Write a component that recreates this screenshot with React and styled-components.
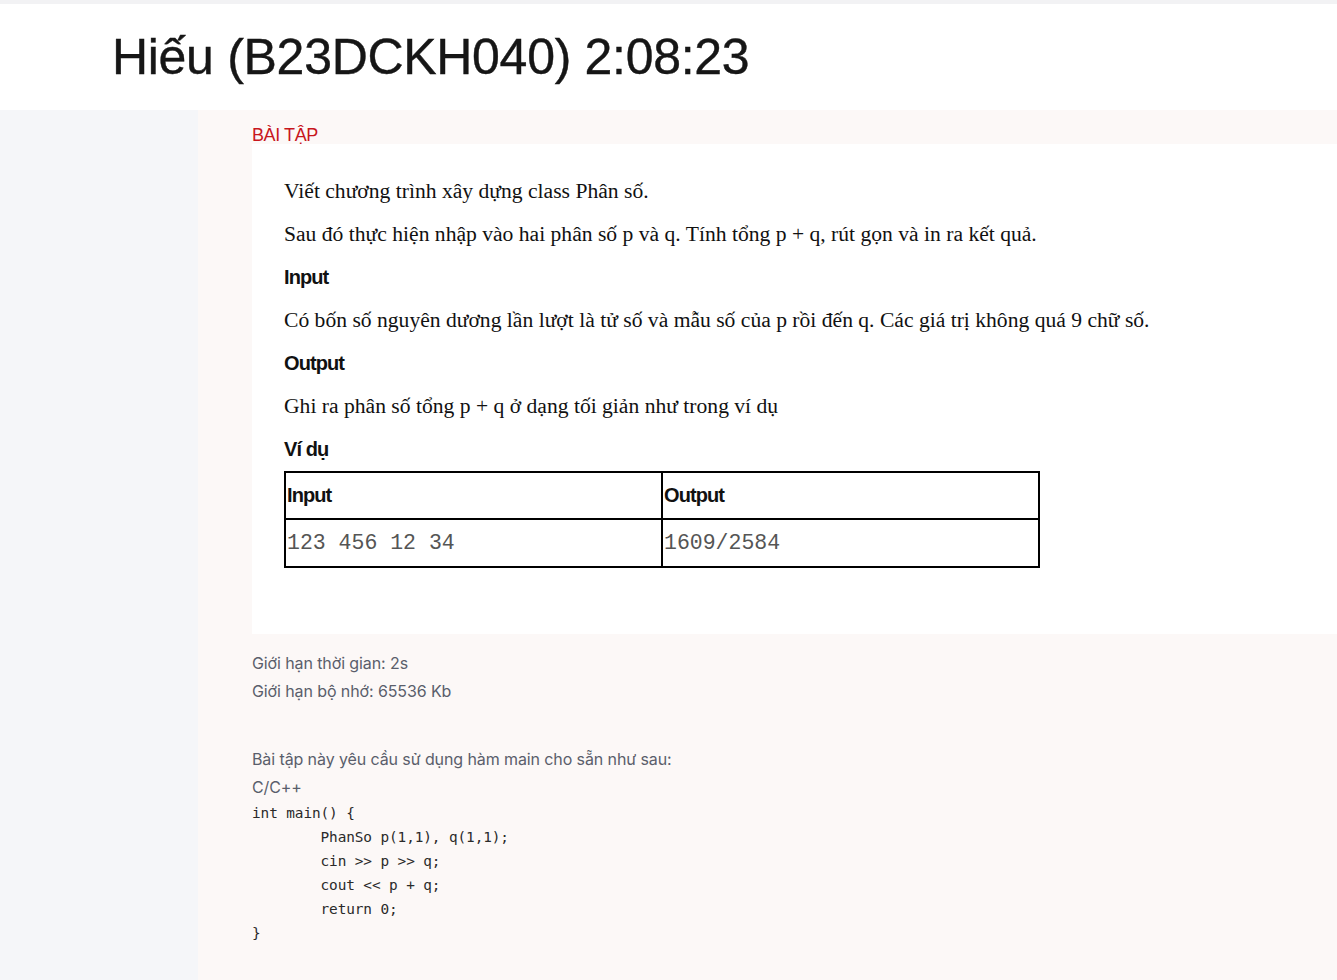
import styled, { createGlobalStyle } from "styled-components";

const GlobalStyle = createGlobalStyle`
  html, body {
    margin: 0;
    padding: 0;
    background: #f5f6f9;
  }
  #root {
    min-height: 100vh;
    display: flex;
    flex-direction: column;
  }
`;

const TopStrip = styled.div`
  height: 4px;
  background: #f2f2f4;
`;

const Header = styled.header`
  height: 106px;
  background: #ffffff;
  display: flex;
  align-items: center;
  padding-left: 112px;
`;

const Title = styled.h1`
  margin: 0;
  font-family: "Liberation Sans", Arial, sans-serif;
  font-size: 50px;
  font-weight: 400;
  letter-spacing: -0.3px;
  color: #161616;
  -webkit-text-stroke: 0.4px #161616;
`;

const Main = styled.div`
  flex: 1;
  display: flex;
`;

const Sidebar = styled.aside`
  width: 198px;
  flex-shrink: 0;
  background: #f5f6f9;
`;

const Content = styled.main`
  flex: 1;
  background: #fcf8f7;
  padding: 16px 0 40px 54px;
`;

const SectionLabel = styled.div`
  font-family: "Liberation Sans", Arial, sans-serif;
  font-size: 18px;
  line-height: 18px;
  letter-spacing: -0.4px;
  color: #c8161d;
  padding-bottom: 0;
`;

const Card = styled.section`
  background: #ffffff;
  padding: 36px 0 66px 32px;
  display: flex;
  flex-direction: column;
  gap: 20px;
`;

const Para = styled.p`
  margin: 0;
  font-family: "Liberation Serif", "Times New Roman", serif;
  font-size: 21.6px;
  line-height: 23px;
  color: #111;
`;

const Heading = styled.h3`
  margin: 0;
  font-family: "Liberation Sans", Arial, sans-serif;
  font-size: 20px;
  line-height: 23px;
  font-weight: 700;
  letter-spacing: -0.9px;
  color: #111;
`;

const Table = styled.table`
  margin-top: -10px;
  width: 756px;
  border-collapse: collapse;
  table-layout: fixed;
`;

const Cell = styled.td`
  border: 2px solid #000;
  height: ${(p) => (p.$head ? "45px" : "46px")};
  padding: 0 1px;
  vertical-align: middle;
  font-family: ${(p) =>
    p.$head ? '"Liberation Sans", Arial, sans-serif' : '"Liberation Mono", "Courier New", monospace'};
  font-size: ${(p) => (p.$head ? "20px" : "21.5px")};
  font-weight: ${(p) => (p.$head ? 700 : 400)};
  letter-spacing: ${(p) => (p.$head ? "-0.9px" : "0")};
  color: ${(p) => (p.$head ? "#111" : "#555")};
`;

const Info = styled.div`
  margin-top: 15px;
  font-family: Inter, "Noto Sans", sans-serif;
  font-size: 16px;
  line-height: 28px;
  letter-spacing: -0.1px;
  color: #5a5e6b;
`;

const InfoGap = styled.div`
  height: ${(p) => p.$h}px;
`;

const Code = styled.pre`
  margin: 0;
  font-family: "DejaVu Sans Mono", "Liberation Mono", monospace;
  font-size: 14.4px;
  line-height: 24px;
  tab-size: 8;
  color: #2a2a2a;
`;

const code = `int main() {
\tPhanSo p(1,1), q(1,1);
\tcin >> p >> q;
\tcout << p + q;
\treturn 0;
}`;

export default function App() {
  return (
    <>
      <GlobalStyle />
      <TopStrip />
      <Header>
        <Title>Hiếu (B23DCKH040) 2:08:23</Title>
      </Header>
      <Main>
        <Sidebar />
        <Content>
          <SectionLabel>BÀI TẬP</SectionLabel>
          <Card>
            <Para>Viết chương trình xây dựng class Phân số.</Para>
            <Para>
              Sau đó thực hiện nhập vào hai phân số p và q. Tính tổng p + q, rút gọn và in ra kết quả.
            </Para>
            <Heading>Input</Heading>
            <Para>
              Có bốn số nguyên dương lần lượt là tử số và mẫu số của p rồi đến q. Các giá trị không quá 9 chữ số.
            </Para>
            <Heading>Output</Heading>
            <Para>Ghi ra phân số tổng p + q ở dạng tối giản như trong ví dụ</Para>
            <Heading>Ví dụ</Heading>
            <Table>
              <tbody>
                <tr>
                  <Cell $head>Input</Cell>
                  <Cell $head>Output</Cell>
                </tr>
                <tr>
                  <Cell>123 456 12 34</Cell>
                  <Cell>1609/2584</Cell>
                </tr>
              </tbody>
            </Table>
          </Card>
          <Info>
            <div>Giới hạn thời gian: 2s</div>
            <div>Giới hạn bộ nhớ: 65536 Kb</div>
            <InfoGap $h={40} />
            <div>Bài tập này yêu cầu sử dụng hàm main cho sẵn như sau:</div>
            <div>C/C++</div>
            <Code>{code}</Code>
          </Info>
        </Content>
      </Main>
    </>
  );
}
